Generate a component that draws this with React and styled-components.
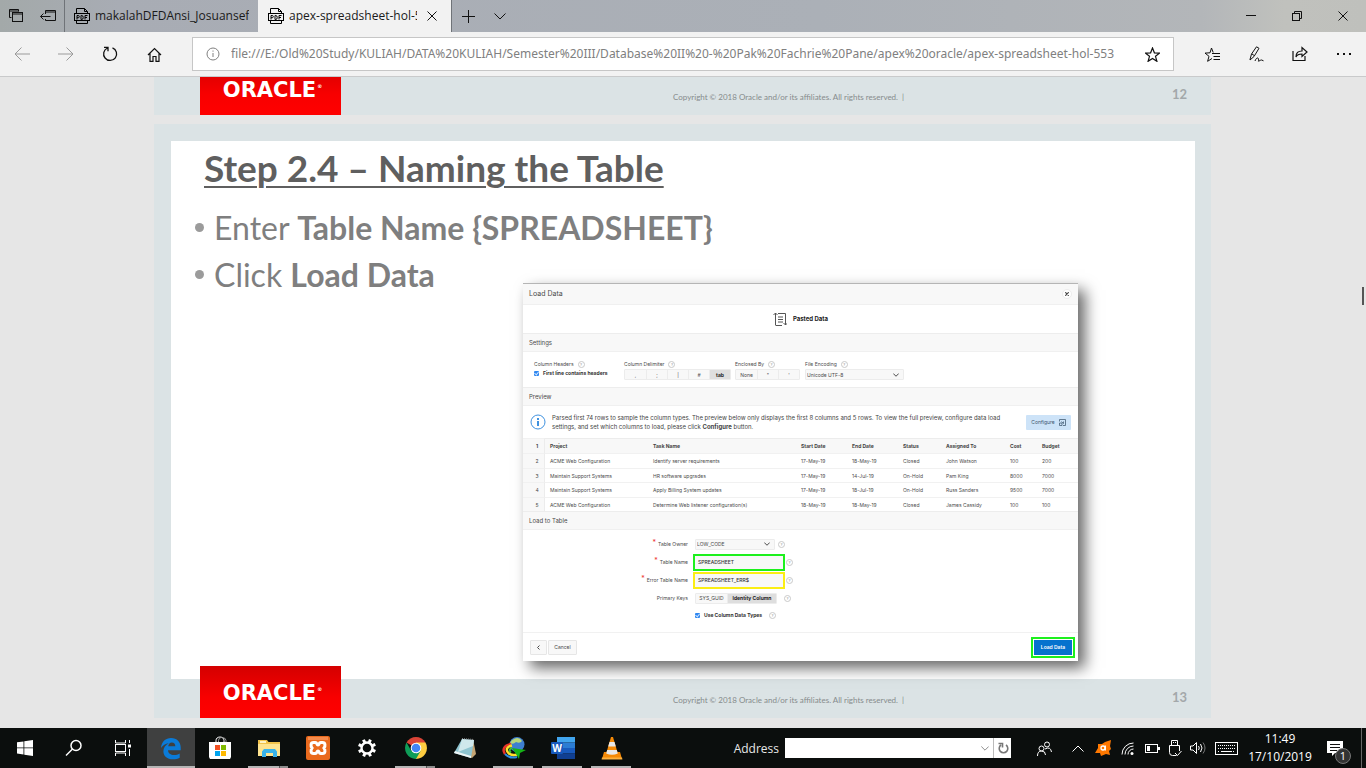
import React from "react";
import styled, { createGlobalStyle, css } from "styled-components";

const UI = `"Open Sans", "Noto Sans", sans-serif`;
const SLIDE = `Lato, "Open Sans", sans-serif`;
const APEX = `Inter, "Liberation Sans", sans-serif`;

const Global = createGlobalStyle`
  * { box-sizing: border-box; }
  body { margin: 0; background: #e6e6e6; font-family: ${UI}; }
  button, input, select { font: inherit; color: inherit; border: 0; background: none; padding: 0; margin: 0; border-radius: 0; }
  svg { display: block; flex: none; }
`;

const Page = styled.div`
  min-height: 100vh;
  display: flex;
  flex-direction: column;
`;

/* ---------- browser chrome ---------- */

const TabStrip = styled.header`
  display: flex;
  height: 32px;
  background: linear-gradient(90deg, #a3a9a9 0, #a8acb4 120px, #abb0b7 60%, #b3b6b9 88%, #c0c1bd 94%, #bfc0bc 100%);
`;
const StripButton = styled.button`
  width: ${(p) => p.$w || 32}px;
  display: grid;
  place-items: center;
  color: #111;
`;
const Tab = styled.div`
  flex: 0 1 194px;
  min-width: 0;
  display: flex;
  align-items: center;
  gap: 5px;
  padding: 0 9px;
  border-left: 1px solid ${(p) => (p.$active ? "#f2f2f2" : "#6f7378")};
  border-right: ${(p) => (p.$active ? "1px solid #6f7378" : "0")};
  background: ${(p) => (p.$active ? "#f2f2f2" : "transparent")};
`;
const TabTitle = styled.span`
  flex: 1;
  font-size: 12px;
  line-height: 18px;
  color: #1a1a1a;
  white-space: nowrap;
  overflow: hidden;
`;
const Spacer = styled.div`
  flex: 1;
`;
const Toolbar = styled.nav`
  display: flex;
  align-items: center;
  height: 45px;
  background: #f2f2f2;
  border-bottom: 1px solid #c9cacb;
`;
const ToolButton = styled.button`
  width: 44px;
  height: 44px;
  display: grid;
  place-items: center;
  color: ${(p) => (p.$dim ? "#9a9a9a" : "#111")};
`;
const AddressBox = styled.div`
  flex: 1;
  min-width: 0;
  height: 34px;
  margin: 0 16px;
  padding: 0 13px;
  display: flex;
  align-items: center;
  gap: 11px;
  background: #fff;
  border: 1px solid #c6c6c6;
  color: #808080;
`;
const AddressInput = styled.input`
  flex: 1;
  min-width: 0;
  font-family: "Noto Sans", sans-serif;
  font-size: 12px;
  line-height: 18px;
  outline: 0;
`;
const StarButton = styled.button`
  color: #111;
`;

/* ---------- document ---------- */

const Viewer = styled.main`
  flex: 1;
  position: relative;
  background: #e6e6e6;
  display: flex;
  flex-direction: column;
  gap: 9px;
  padding: 0 155px 10px 154px;
`;
const ScrollThumb = styled.div`
  position: absolute;
  right: 2px;
  top: 210px;
  width: 2px;
  height: 18px;
  background: #555;
`;
const Slide = styled.section`
  background: #dbe3e5;
  font-family: ${SLIDE};
  padding: ${(p) => (p.$tail ? "0" : "17px 0 0")};
`;
const SlideBody = styled.div`
  background: #fff;
  margin: 0 16px 0 17px;
  padding: 3px 0 18px;
  display: flex;
  flex-direction: column;
`;
const SlideTitle = styled.h1`
  margin: 0;
  padding-left: 33px;
  font-size: 37px;
  line-height: 48px;
  font-weight: 700;
  color: #5f5f5f;
  text-decoration: underline;
  text-decoration-thickness: 2px;
  text-underline-offset: 4px;
`;
const Bullets = styled.ul`
  margin: 12px 0 0;
  padding: 0 0 0 24px;
  list-style: none;
  color: #7f7f7f;
  font-size: 32px;
  line-height: 47px;
`;
const Bullet = styled.li`
  display: flex;
  align-items: center;
  gap: 10px;
  &::before {
    content: "";
    width: 9px;
    height: 9px;
    border-radius: 50%;
    background: #9b9b9b;
  }
`;
const SlideFoot = styled.footer`
  display: flex;
  align-items: flex-end;
  height: ${(p) => (p.$tail ? 38 : 39)}px;
  padding: 0 24px 0 46px;
  overflow: ${(p) => (p.$tail ? "hidden" : "visible")};
`;
const Brand = styled.div`
  position: relative;
  width: 141px;
  height: 52px;
  flex: none;
  display: flex;
  justify-content: center;
  align-items: center;
  gap: 1px;
  padding: 2px 0 0 4px;
  background: linear-gradient(#d40000, #f80000 60%, #ff0000);
  color: #fff;
  font-family: "DejaVu Sans", sans-serif;
  font-size: 21px;
  font-weight: 700;
  line-height: 26px;
`;
const Reg = styled.small`
  font-size: 5px;
  line-height: 10px;
  height: 18px;
`;
const Copyright = styled.span`
  flex: 1;
  padding-left: 332px;
  height: 26px;
  font-size: 8px;
  line-height: 16px;
  color: #868b8c;
`;
const PageNo = styled.span`
  height: 29px;
  font-size: 13px;
  line-height: 16px;
  font-weight: 700;
  color: #a3a8aa;
`;

/* ---------- Load Data dialog ---------- */

const Dialog = styled.section`
  align-self: flex-end;
  width: 555px;
  margin: -15px 117px 0 0;
  background: #fff;
  border-top: 1px solid #b5b5b5;
  box-shadow: 7px 7px 14px rgba(0, 0, 0, 0.6);
  font-family: ${APEX};
  font-size: 5px;
  line-height: 8px;
  color: #4a4a4a;
`;
const Bar = styled.div`
  display: flex;
  align-items: center;
  justify-content: space-between;
  height: ${(p) => p.$h || 19}px;
  padding: 0 6px;
  background: #f8f8f8;
  border-top: ${(p) => (p.$h ? "0" : "1px solid #ededed")};
  border-bottom: 1px solid #f0f0f0;
  font-size: ${(p) => (p.$h ? 7 : 6)}px;
`;
const CloseDialog = styled.button`
  width: 10px;
  height: 10px;
  display: grid;
  place-items: center;
  border: 1px solid #ececec;
  border-radius: 50%;
  background: #fff;
`;
const Pasted = styled.div`
  height: 28px;
  display: flex;
  align-items: center;
  justify-content: center;
  gap: 6px;
  font-size: 6px;
  font-weight: 700;
  color: #222;
`;
const Settings = styled.div`
  height: 35px;
  display: grid;
  grid-template-columns: 90px 111px 70px 99px;
  padding: 8px 11px 0;
`;
const Group = styled.div`
  display: flex;
  flex-direction: column;
  gap: 1px;
`;
const GroupLabel = styled.div`
  display: flex;
  align-items: center;
  gap: 4px;
  white-space: nowrap;
`;
const Help = styled.button`
  width: 7px;
  height: 7px;
  display: grid;
  place-items: center;
  border: 1px solid #c9c9c9;
  border-radius: 50%;
  font-size: 4px;
  line-height: 5px;
  color: #888;
`;
const Check = styled.label`
  display: flex;
  align-items: center;
  gap: 4px;
  font-weight: 700;
  white-space: nowrap;
  color: #333;
`;
const Tick = styled.input`
  appearance: none;
  width: 5px;
  height: 5px;
  border-radius: 1px;
  background: #2f87f0;
  display: grid;
  place-items: center;
  &:checked::before {
    content: "";
    width: 2px;
    height: 3px;
    border: solid #cfe4ff;
    border-width: 0 1px 1px 0;
    transform: rotate(40deg);
  }
`;
const Segments = styled.div`
  display: flex;
  width: max-content;
  height: 11px;
  border: 1px solid #ececec;
  border-radius: 1px;
  background: #f8f8f8;
`;
const Segment = styled.button`
  width: ${(p) => p.$w || 21}px;
  display: grid;
  place-items: center;
  border-left: 1px solid #ececec;
  white-space: nowrap;
  &:first-child { border-left: 0; }
  ${(p) => p.$on && css`
    background: #dedede;
    font-weight: 700;
    color: #222;
  `}
`;
const SelectWrap = styled.div`
  display: flex;
  align-items: center;
  width: ${(p) => p.$w}px;
  height: 11px;
  padding-right: 4px;
  background: #f8f8f8;
  border: 1px solid #ececec;
  border-radius: 1px;
`;
const SelectBox = styled.select`
  appearance: none;
  flex: 1;
  padding-left: 1px;
`;
const Info = styled.div`
  height: 32px;
  display: flex;
  align-items: center;
  gap: 6px;
  padding: 0 7px;
`;
const InfoText = styled.p`
  flex: 1;
  margin: 0;
  font-size: 6px;
  line-height: 9px;
  color: #444;
  white-space: nowrap;
`;
const Configure = styled.button`
  width: 45px;
  height: 15px;
  display: flex;
  align-items: center;
  justify-content: center;
  gap: 4px;
  border-radius: 1px;
  background: #cde3f8;
  color: #3c556d;
`;
const DataTable = styled.table`
  width: 100%;
  table-layout: fixed;
  border-collapse: separate;
  border-spacing: 0;
  text-align: left;
  tr { height: 15px; }
  tr:nth-child(even) { height: 14px; }
`;
const Cell = styled.td`
  padding: 0 0 0 5px;
  border-top: 1px solid #f1f1f1;
  white-space: nowrap;
  color: #4c4c4c;
`;
const HeadCell = styled.th`
  padding: 0 0 0 5px;
  border-top: 1px solid #ececec;
  background: #f8f8f8;
  font-weight: 700;
  white-space: nowrap;
  color: #444;
`;
const RowNo = styled.th`
  padding: 0 0 0 7px;
  text-align: center;
  background: #f8f8f8;
  border-top: 1px solid #f1f1f1;
  border-right: 1px solid #ececec;
  font-weight: ${(p) => (p.$head ? 700 : 400)};
`;
const Form = styled.form`
  height: 102px;
  padding-top: 5px;
`;
const FormRow = styled.div`
  display: grid;
  grid-template-columns: 165px auto auto;
  justify-content: start;
  align-items: center;
  height: 18px;
  column-gap: ${(p) => p.$gap || 7}px;
  &:last-child { height: 16px; }
  ${SelectWrap} + ${Help}, ${() => FieldRef} + ${Help} { margin-left: -4px; }
`;
const FormLabel = styled.label`
  text-align: right;
  white-space: nowrap;
`;
const Star = styled.span`
  color: #e33;
  font-size: 7px;
  vertical-align: top;
  line-height: 5px;
  margin-right: 2px;
`;
const Field = styled.input`
  width: 92px;
  height: 17px;
  padding: 0 3px;
  border: 2px solid ${(p) => p.$mark};
  background: #f8f8f8;
  outline: 0;
  color: #333;
  font-weight: 500;
`;
const FieldRef = Field;
const DialogFoot = styled.div`
  height: 29px;
  display: flex;
  align-items: center;
  gap: 1px;
  padding: 0 3px 0 7px;
  border-top: 1px solid #f1f1f1;
`;
const PlainButton = styled.button`
  width: ${(p) => p.$w}px;
  height: 15px;
  display: grid;
  place-items: center;
  border: 1px solid #e6e6e6;
  border-radius: 1px;
  background: #f8f8f8;
`;
const Highlight = styled.div`
  padding: 1px;
  border: 2px solid #1df01d;
`;
const Submit = styled.button`
  display: block;
  width: 38px;
  height: 15px;
  background: #0572ce;
  color: #fff;
  font-weight: 600;
`;

/* ---------- taskbar ---------- */

const Taskbar = styled.footer`
  display: flex;
  align-items: stretch;
  height: 40px;
  background: #0b0e0d;
  color: #fff;
  font-size: 12px;
`;
const TaskButton = styled.button`
  width: ${(p) => (p.$active ? 48 : 49)}px;
  display: grid;
  place-items: center;
  background: ${(p) => (p.$active ? "#3f4040" : "transparent")};
  position: relative;
  &::after {
    content: "";
    position: absolute;
    bottom: 0;
    left: ${(p) => (p.$active ? 0 : 4)}px;
    right: ${(p) => (p.$active ? 0 : 5)}px;
    height: ${(p) => (p.$open || p.$active ? 2 : 0)}px;
    background: ${(p) => (p.$many ? "linear-gradient(90deg, #b5b5b5 31px, #555 31px, #555 32px, #8c8c8c 32px)" : "#b5b5b5")};
  }
`;
const Address = styled.div`
  display: flex;
  align-items: center;
  gap: 6px;
  label { font-size: 12px; color: #e8e8e8; }
`;
const AddressEntry = styled.div`
  display: flex;
  width: 226px;
  height: 20px;
  background: #fff;
  color: #555;
  input { flex: 1; min-width: 0; color: #111; outline: 0; }
`;
const EntryButton = styled.button`
  width: 18px;
  display: grid;
  place-items: center;
  border-left: 1px solid ${(p) => (p.$line ? "#bbb" : "#fff")};
`;
const Tray = styled.div`
  display: flex;
  align-items: stretch;
  padding-left: 14px;
`;
const TrayButton = styled.button`
  width: ${(p) => p.$w || 24}px;
  display: grid;
  place-items: center;
  color: #fff;
`;
const Clock = styled.time`
  width: 74px;
  text-align: center;
  font-size: 12px;
  line-height: 18px;
  padding-top: 2px;
`;
const Badge = styled.span`
  position: absolute;
  right: -8px;
  bottom: -8px;
  width: 16px;
  height: 16px;
  border: 1px solid #777;
  border-radius: 50%;
  background: #333;
  font-size: 11px;
  line-height: 14px;
  text-align: center;
`;
const Notice = styled.span`
  position: relative;
`;
const ShowDesktop = styled.button`
  width: 5px;
  margin-left: 8px;
  border-left: 1px solid #666;
`;

/* ---------- drawings ---------- */

const Line = ({ w = 16, h = w, box, sw = 1, children, ...rest }) => (
  <svg width={w} height={h} viewBox={box || `0 0 ${w} ${h}`} fill="none" stroke="currentColor" strokeWidth={sw} aria-hidden="true" {...rest}>
    {children}
  </svg>
);

const PdfIcon = () => (
  <Line>
    <path d="M2.500 5V.5h8l3 3V5M10.500.5v3h3M2.500 13v2.500h11V13" />
    <rect x=".5" y="5.500" width="15" height="7" />
    <path d="M3 11.500v-4h1.300q1 0 1 1.100T4.300 9.700H3M7 7.500v4h.8q1.400 0 1.400-2T7.800 7.500zM11 11.500v-4h2.500M11 9.500h2" />
  </Line>
);
const Chevron = ({ w = 12, up }) => (
  <Line w={w} h={w / 2 + 1} box="0 0 12 7" sw={w < 8 ? 2 : 1}>
    <path d={up ? "M.5 6.500L6 1l5.500 5.500" : "M.5.5L6 6 11.500.5"} />
  </Line>
);
const Cross = ({ w = 10 }) => (
  <Line w={w} box="0 0 10 10" sw={w < 8 ? 3 : 1}><path d="M.5.5l9 9M9.500.5l-9 9" /></Line>
);
const StarPath = "M7.500 1l1.900 4.800 5.100.3-4 3.200 1.400 5-4.400-2.800-4.400 2.800 1.400-5-4-3.200 5.100-.3z";

const EdgeLogo = () => (
  <svg width="22" height="23" viewBox="0 0 22 23" aria-hidden="true">
    <path fill="#0b7bd8" d="M1 11C1.500 4.500 5.800 1 11 1c6 0 9.700 4.200 9.700 9.600v2.700H8c.1 3.200 2.800 4.700 6 4.700 2.200 0 4-.6 5.700-1.600v4.300C17.800 21.800 15.600 22.300 13 22.300 7 22.300 3.400 19 3.400 14.200c0-3.700 2.100-6.300 5.300-8C5.500 6.500 2.700 8.300 1 11zm7.200-1.700h7.100c0-2.500-1.200-3.900-3.500-3.900-1.900 0-3.200 1.500-3.600 3.900z" />
  </svg>
);
const StoreLogo = () => (
  <svg width="24" height="24" viewBox="0 0 24 24" aria-hidden="true">
    <path d="M8 7V4.500C8 2.500 9.500 1 12 1s4 1.500 4 3.500V7" fill="none" stroke="#fff" />
    <path d="M10.500 7V4.500Q10.500 2 13 1.500M18 7V4.500Q18 2 14.500 1.500" fill="none" stroke="#999" />
    <path d="M1 6h22v15l-1 2H2l-1-2z" fill="#fff" />
    <path d="M7 9h5v5H7z" fill="#f25022" /><path d="M13 9h5v5h-5z" fill="#7fba00" />
    <path d="M7 15h5v5H7z" fill="#00a4ef" /><path d="M13 15h5v5h-5z" fill="#ffb900" />
  </svg>
);
const FolderLogo = () => (
  <svg width="22" height="19" viewBox="0 0 22 19" aria-hidden="true">
    <path d="M0 1h9l1.500 2H22v14H0z" fill="#f2c34b" /><path d="M2 2h6v2H2z" fill="#fff3c4" />
    <path d="M0 5h22v12H0z" fill="#ffe48f" />
    <path d="M4 18v-5.500L6 10h11l2 2.500V18h-4v-4H8v4z" fill="#39b3ea" />
  </svg>
);
const XamppLogo = () => (
  <svg width="24" height="24" viewBox="0 0 24 24" aria-hidden="true">
    <rect width="24" height="24" rx="2" fill="#ea6a1d" /><path d="M2 1h20v3H2z" fill="#f58b4c" />
    <path d="M7.500 6.500h1.800c2 0 1.200 2.500 2.700 2.500s.7-2.500 2.700-2.500h1.800c3 0 3 3.500 1.500 5.500 1.500 2 1.500 5.500-1.500 5.500h-1.800c-2 0-1.200-2.500-2.700-2.500s-.7 2.500-2.700 2.500H7.500c-3 0-3-3.500-1.500-5.500-1.500-2-1.500-5.500 1.500-5.500z" fill="none" stroke="#fff" strokeWidth="3" />
  </svg>
);
const Gear = () => (
  <svg width="20" height="20" viewBox="0 0 20 20" fill="none" stroke="#fff" aria-hidden="true">
    <circle cx="10" cy="10" r="5.500" strokeWidth="2.400" />
    <g strokeWidth="3">
      {[0, 45, 90, 135, 180, 225, 270, 315].map((a) => (
        <path key={a} d="M10 1v3" transform={`rotate(${a + 22} 10 10)`} />
      ))}
    </g>
  </svg>
);
const ChromeLogo = () => (
  <svg width="22" height="22" viewBox="0 0 22 22" aria-hidden="true">
    <path d="M11 11L1.500 5.500A11 11 0 0 1 20.500 5.500z" fill="#db4437" />
    <path d="M11 11V5.500h9.500A11 11 0 0 1 11 22z" fill="#ffcd40" />
    <path d="M11 22A11 11 0 0 1 1.500 5.500L6.200 13.700 11 16.500 15.700 13.700z" fill="#0f9d58" />
    <circle cx="11" cy="11" r="5.300" fill="#fff" /><circle cx="11" cy="11" r="4.300" fill="#4285f4" />
  </svg>
);
const NotepadLogo = () => (
  <svg width="24" height="24" viewBox="0 0 24 24" aria-hidden="true">
    <path d="M20 3l3 15-4 4-3-1z" fill="#c5a574" />
    <path d="M9 3l12 1-3 18L1 17z" fill="#8fc5d1" /><path d="M9 3l12 1-1 6L5 16z" fill="#cfe8ec" />
    <path d="M1 17l17 5v-2L2 15z" fill="#eef5f6" /><path d="M9 2.500l12 1" stroke="#888" strokeDasharray="1 1" />
  </svg>
);
const IdmLogo = () => (
  <svg width="24" height="24" viewBox="0 0 24 24" aria-hidden="true">
    <circle cx="15" cy="8.500" r="7.500" fill="#3e7fd0" /><path d="M12 3q5-3 8 2-2 3-6 1-3 3-6 1 1-3 4-4z" fill="#b8d77c" />
    <path d="M9 8C2 9 0 14 3 18" fill="none" stroke="#e8332a" strokeWidth="2.500" />
    <path d="M10 9.500c-5 1-6.500 4-4 7s6 3 9 2" fill="none" stroke="#ffdf2b" strokeWidth="2.500" />
    <path d="M10 12c-3 1-3 3-1 4.500" fill="none" stroke="#3fc03a" strokeWidth="2" />
    <path d="M3 18q5 5 12 3" fill="none" stroke="#2d8de0" strokeWidth="2" />
    <path d="M10 12l14 2-6 3-1 6-3-5z" fill="#16b316" />
  </svg>
);
const WordLogo = () => (
  <svg width="24" height="22" viewBox="0 0 24 22" aria-hidden="true">
    <path d="M6 0h18v5.500H6z" fill="#41a5ee" /><path d="M6 5.500h18V11H6z" fill="#2b7cd3" />
    <path d="M6 11h18v5.500H6z" fill="#185abd" /><path d="M6 16.500h18V22H6z" fill="#103f91" />
    <rect y="5" width="12" height="12" rx="1" fill="#185abd" />
    <text x="6" y="15" textAnchor="middle" fill="#fff" fontFamily="Open Sans" fontWeight="700" fontSize="10">W</text>
  </svg>
);
const VlcLogo = () => (
  <svg width="22" height="24" viewBox="0 0 22 24" aria-hidden="true">
    <path d="M3 16h16l2 7H1z" fill="#f58a07" /><path d="M1 21.500h20l.4 2H.6z" fill="#ffb13d" />
    <path d="M10 1h2l5 17q-6 3-12 0z" fill="#f58a07" />
    <path d="M8.500 6h5l1.300 4.500H7.200zM6.200 14h9.600l1 3.500q-5.800 2.500-11.600 0z" fill="#e9e9e9" />
  </svg>
);

/* ---------- data ---------- */

const URL_TEXT =
  "file:///E:/Old%20Study/KULIAH/DATA%20KULIAH/Semester%20III/Database%20II%20-%20Pak%20Fachrie%20Pane/apex%20oracle/apex-spreadsheet-hol-553";

const COLS = [22, 103, 148, 51, 51, 43, 64, 32, 41];
const HEADS = ["Project", "Task Name", "Start Date", "End Date", "Status", "Assigned To", "Cost", "Budget"];
const ROWS = [
  ["ACME Web Configuration", "Identify server requirements", "17-May-19", "18-May-19", "Closed", "John Watson", "100", "200"],
  ["Maintain Support Systems", "HR software upgrades", "17-May-19", "14-Jul-19", "On-Hold", "Pam King", "8000", "7000"],
  ["Maintain Support Systems", "Apply Billing System updates", "17-May-19", "18-Jul-19", "On-Hold", "Russ Sanders", "9500", "7000"],
  ["ACME Web Configuration", "Determine Web listener configuration(s)", "18-May-19", "18-May-19", "Closed", "James Cassidy", "100", "100"],
];

const APPS = [
  { name: "Start", icon: <svg width="16" height="16" viewBox="0 0 16 16" fill="#fff" aria-hidden="true"><path d="M0 2.300l6.500-.9v6.100H0zM7.300 1.300L16 0v7.500H7.300zM0 8.300h6.500v6.100L0 13.500zM7.300 8.300H16V16l-8.700-1.200z" /></svg> },
  { name: "Search", icon: <Line w={18} sw={1.5}><circle cx="11" cy="6.500" r="5" /><path d="M7.500 10L1 16.500" /></Line> },
  { name: "Task View", icon: <Line w={18}><path d="M1.500 1v3h10V1M1.500 17v-3h10v3M15.500 1v3M15.500 10v7" /><rect x="1.500" y="5.500" width="10" height="7" /><path d="M14 5.500h3v3h-3z" fill="currentColor" stroke="none" /></Line> },
  { name: "Microsoft Edge", icon: <EdgeLogo />, active: true },
  { name: "Store", icon: <StoreLogo /> },
  { name: "File Explorer", icon: <FolderLogo />, open: true, many: true },
  { name: "XAMPP", icon: <XamppLogo /> },
  { name: "Settings", icon: <Gear /> },
  { name: "Chrome", icon: <ChromeLogo />, open: true, many: true },
  { name: "Notepad", icon: <NotepadLogo /> },
  { name: "IDM", icon: <IdmLogo />, open: true },
  { name: "Word", icon: <WordLogo />, open: true },
  { name: "VLC", icon: <VlcLogo />, open: true },
];

const HelpDot = () => <Help type="button" aria-label="Help">?</Help>;

function BrowserChrome() {
  return (
    <>
      <TabStrip>
        <StripButton aria-label="Tabs set aside">
          <Line w={14}><path d="M.5.5h9v2M.5.5v8h2M.5 2h9" /><rect x="3.500" y="3.500" width="10" height="9" /><path d="M3.500 5h10" /></Line>
        </StripButton>
        <StripButton aria-label="Set tabs aside">
          <Line w={16} h={12}><path d="M5.500 4V.5h10v10h-10V9M5.500 2h10M.5 6.500h10M3.500 3.500l-3 3 3 3" /></Line>
        </StripButton>
        <Tab><PdfIcon /><TabTitle>makalahDFDAnsi_Josuansef</TabTitle></Tab>
        <Tab $active>
          <PdfIcon />
          <TabTitle>apex-spreadsheet-hol-5</TabTitle>
          <StripButton $w={20} aria-label="Close tab"><Cross /></StripButton>
        </Tab>
        <StripButton aria-label="New tab"><Line w={14}><path d="M7.500 1v13M1 7.500h13" /></Line></StripButton>
        <StripButton aria-label="Tab previews"><Chevron /></StripButton>
        <Spacer />
        <StripButton $w={46} aria-label="Minimize"><Line w={10} h={2}><path d="M0 .5h10" /></Line></StripButton>
        <StripButton $w={46} aria-label="Restore"><Line w={10}><rect x=".5" y="2.500" width="7" height="7" /><path d="M2.500 2V.5h7v7H8" /></Line></StripButton>
        <StripButton $w={46} aria-label="Close window"><Cross /></StripButton>
      </TabStrip>
      <Toolbar>
        <ToolButton $dim aria-label="Back"><Line w={16} h={14}><path d="M16 7H1M7.500.5L1 7l6.500 6.500" /></Line></ToolButton>
        <ToolButton $dim aria-label="Forward"><Line w={16} h={14}><path d="M0 7h15M8.500.5L15 7l-6.500 6.500" /></Line></ToolButton>
        <ToolButton aria-label="Refresh"><Line w={16} sw={1.3}><path d="M5.500 2a6.500 6.500 0 1 0 5-.1M2 1.300h4v4" /></Line></ToolButton>
        <ToolButton aria-label="Home"><Line w={15} sw={1.2}><path d="M1 8l6.500-6.500L14 8M3 6.500v7.900h3V9.500h3v4.900h3V6.500" /></Line></ToolButton>
        <AddressBox>
          <Line w={14}><circle cx="7" cy="7" r="6" /><path d="M7 6v4M7 3.500v1.200" /></Line>
          <AddressInput readOnly aria-label="Address" value={URL_TEXT} />
          <StarButton aria-label="Add to favorites"><Line w={15} sw={1.2}><path d={StarPath} /></Line></StarButton>
        </AddressBox>
        <ToolButton aria-label="Favorites"><Line w={16} h={15}><path d="M8 11.500l-4.400 2.800 1.400-5L1 6.100l5-.3L7.500 1l1.700 4.500M8 6.500h8M9.500 9.500H16M9.500 12.500H16" /></Line></ToolButton>
        <ToolButton aria-label="Add notes"><Line w={16}><path d="M2 13.500L3.500 8 8.500.8l2.500 1.500L6 10.500l-4 3.500zM4 8l2.200 1.500M7 15c1-3 3-4 3.500-2s-1 2.500.5 2 2-1.500 3-.8l1.500.6" /></Line></ToolButton>
        <ToolButton aria-label="Share"><Line w={16} sw={1.2}><path d="M1 5v9.500h12V10M4 11c0-4 2-6 6-6V1.500L15 6l-5 4.500V8C7 8 5 8.500 4 11z" /></Line></ToolButton>
        <ToolButton aria-label="More"><Line w={14} h={2}><path d="M0 1h2M6 1h2M12 1h2" strokeWidth="2" /></Line></ToolButton>
      </Toolbar>
    </>
  );
}

function Foot({ page, tail }) {
  return (
    <SlideFoot $tail={tail}>
      <Brand>ORACLE<Reg>®</Reg></Brand>
      <Copyright>Copyright © 2018 Oracle and/or its affiliates. All rights reserved. &nbsp;|</Copyright>
      <PageNo>{page}</PageNo>
    </SlideFoot>
  );
}

function LoadDataDialog() {
  return (
    <Dialog>
      <Bar $h={21}>Load Data<CloseDialog aria-label="Close"><Cross w={4} /></CloseDialog></Bar>
      <Pasted>
        <Line w={14} color="#555"><path d="M2.500 13V1M.5 3l2-2 2 2M5 1.500h7.500V13M10.500 11l2 2 2-2M2.500 13.500H9M5 5h5M5 7.500h5M5 10h5" /></Line>
        Pasted Data
      </Pasted>
      <Bar>Settings</Bar>
      <Settings>
        <Group>
          <GroupLabel>Column Headers <HelpDot /></GroupLabel>
          <Check><Tick type="checkbox" defaultChecked />First line contains headers</Check>
        </Group>
        <Group>
          <GroupLabel>Column Delimiter <HelpDot /></GroupLabel>
          <Segments>
            {[",", ";", "|", "#"].map((s) => <Segment key={s}>{s}</Segment>)}
            <Segment $on>tab</Segment>
          </Segments>
        </Group>
        <Group>
          <GroupLabel>Enclosed By <HelpDot /></GroupLabel>
          <Segments><Segment>None</Segment><Segment>"</Segment><Segment>'</Segment></Segments>
        </Group>
        <Group>
          <GroupLabel><label htmlFor="enc">File Encoding</label> <HelpDot /></GroupLabel>
          <SelectWrap $w={99}>
            <SelectBox id="enc"><option>Unicode UTF-8</option></SelectBox><Chevron w={6} />
          </SelectWrap>
        </Group>
      </Settings>
      <Bar>Preview</Bar>
      <Info>
        <Line w={16} color="#3f92e0"><circle cx="8" cy="8" r="7" /><path d="M8 7v5M8 4v2" strokeWidth="2" /></Line>
        <InfoText>
          Parsed first 74 rows to sample the column types. The preview below only displays the first 8 columns and 5 rows. To view the full preview, configure data load<br />
          settings, and set which columns to load, please click <b>Configure</b> button.
        </InfoText>
        <Configure>Configure <Line w={7} box="0 0 14 14" sw={1.5}><path d="M1 5V1h12v12H8M1 8h5v5H1zM5 5l4 4V5" /></Line></Configure>
      </Info>
      <DataTable>
        <colgroup>{COLS.map((w, i) => <col key={i} width={w} />)}</colgroup>
        <thead>
          <tr><RowNo $head>1</RowNo>{HEADS.map((h) => <HeadCell key={h}>{h}</HeadCell>)}</tr>
        </thead>
        <tbody>
          {ROWS.map((r, i) => (
            <tr key={i}><RowNo>{i + 2}</RowNo>{r.map((c, j) => <Cell key={j}>{c}</Cell>)}</tr>
          ))}
        </tbody>
      </DataTable>
      <Bar>Load to Table</Bar>
      <Form>
        <FormRow>
          <FormLabel htmlFor="owner"><Star>*</Star>Table Owner</FormLabel>
          <SelectWrap $w={80}><SelectBox id="owner"><option>LOW_CODE</option></SelectBox><Chevron w={6} /></SelectWrap>
          <HelpDot />
        </FormRow>
        <FormRow $gap={5}>
          <FormLabel htmlFor="tname"><Star>*</Star>Table Name</FormLabel>
          <Field id="tname" $mark="#1df01d" defaultValue="SPREADSHEET" />
          <HelpDot />
        </FormRow>
        <FormRow $gap={5}>
          <FormLabel htmlFor="ename"><Star>*</Star>Error Table Name</FormLabel>
          <Field id="ename" $mark="#fbee13" defaultValue="SPREADSHEET_ERR$" />
          <HelpDot />
        </FormRow>
        <FormRow>
          <FormLabel as="span">Primary Keys</FormLabel>
          <Segments><Segment type="button" $w={31}>SYS_GUID</Segment><Segment type="button" $w={49} $on>Identity Column</Segment></Segments>
          <HelpDot />
        </FormRow>
        <FormRow>
          <span />
          <Check><Tick type="checkbox" defaultChecked />Use Column Data Types</Check>
          <HelpDot />
        </FormRow>
      </Form>
      <DialogFoot>
        <PlainButton $w={17} aria-label="Previous"><Line w={3} h={5}><path d="M2.500.5l-2 2 2 2" /></Line></PlainButton>
        <PlainButton $w={29}>Cancel</PlainButton>
        <Spacer />
        <Highlight><Submit>Load Data</Submit></Highlight>
      </DialogFoot>
    </Dialog>
  );
}

function WindowsTaskbar() {
  return (
    <Taskbar>
      {APPS.map((a) => (
        <TaskButton key={a.name} aria-label={a.name} $active={a.active} $open={a.open} $many={a.many}>{a.icon}</TaskButton>
      ))}
      <Spacer />
      <Address>
        <label htmlFor="addr">Address</label>
        <AddressEntry>
          <input id="addr" />
          <EntryButton aria-label="Address history"><Chevron w={8} /></EntryButton>
          <EntryButton $line aria-label="Go"><Line w={12} color="#777" sw={1.6}><path d="M9 3a4.300 4.300 0 1 1-5 0M1.500 1.500h4v4" /></Line></EntryButton>
        </AddressEntry>
      </Address>
      <Tray>
        <TrayButton $w={38} aria-label="People"><Line w={15}><circle cx="10" cy="3.500" r="2.500" /><circle cx="4.500" cy="7.500" r="2.500" /><path d="M.5 15q0-5 4-5t4 4M8 8q5.500-3 6.500 3" /></Line></TrayButton>
        <TrayButton $w={30} aria-label="Hidden icons"><Chevron up /></TrayButton>
        <TrayButton $w={20} aria-label="Avast">
          <svg width="17" height="16" viewBox="0 0 17 16" aria-hidden="true"><path d="M10 2l6-2-1 6 1 3-2 2 1 4-4-1-5 2-1-3-5 0 3-5 0-4 4 0z" fill="#ff7800" /><circle cx="8" cy="8" r="2" fill="none" stroke="#fff" strokeWidth="1.300" /><path d="M10.300 5.500v5" stroke="#fff" strokeWidth="1.300" /></svg>
        </TrayButton>
        <TrayButton $w={28} aria-label="Wi-Fi"><Line w={13}><path d="M1 12.500A11.500 11.500 0 0 1 12.500 1M4 12.500A8.500 8.500 0 0 1 12.500 4M7 12.500A5.500 5.500 0 0 1 12.500 7" /><circle cx="11" cy="11.500" r="1.500" fill="currentColor" stroke="none" /></Line></TrayButton>
        <TrayButton $w={22} aria-label="Battery"><Line w={15} h={9}><rect x=".5" y=".5" width="12" height="8" /><path d="M14 3v3" strokeWidth="2" /><path d="M2 2h3v5H2z" fill="currentColor" stroke="none" /></Line></TrayButton>
        <TrayButton $w={24} aria-label="Safely remove hardware"><Line w={14} h={16}><path d="M3.500 5V.5h6V5M8.500 15.500h-4q-3 0-3-3V5.500h10V11M5.500 2v1M7.500 2v1M7 13l2.500 2.500 4-4.500" /></Line></TrayButton>
        <TrayButton $w={22} aria-label="Volume"><Line w={16} h={14}><path d="M.5 5v4H3l3.500 3.500V1.500L3 5zM8.500 5q1.500 2 0 4M10.500 3q3 4 0 8" /><path d="M13 1.500q4 5.500 0 11" stroke="#777" /></Line></TrayButton>
        <TrayButton $w={34} aria-label="Touch keyboard"><Line w={23} h={13}><rect x=".5" y=".5" width="22" height="12" /><path d="M3 3.500h17M3 6.500h17M3 9.500h2M18 9.500h2" strokeDasharray="1 1" /><path d="M6 9.500h11" /></Line></TrayButton>
        <Clock>11:49<br />17/10/2019</Clock>
        <TrayButton $w={36} aria-label="Notifications">
          <Notice>
            <svg width="16" height="15" viewBox="0 0 16 15" aria-hidden="true"><path d="M0 0h16v12H8l-3 3v-3H0z" fill="#fff" /><path d="M3 3.500h10M3 6.500h10M3 9.500h7" stroke="#111" /></svg>
            <Badge>1</Badge>
          </Notice>
        </TrayButton>
        <ShowDesktop aria-label="Show desktop" />
      </Tray>
    </Taskbar>
  );
}

export default function App() {
  return (
    <Page>
      <Global />
      <BrowserChrome />
      <Viewer>
        <Slide $tail><Foot page="12" tail /></Slide>
        <Slide>
          <SlideBody>
            <SlideTitle>Step 2.4 – Naming the Table</SlideTitle>
            <Bullets>
              <Bullet><span>Enter <b>Table Name {"{SPREADSHEET}"}</b></span></Bullet>
              <Bullet><span>Click <b>Load Data</b></span></Bullet>
            </Bullets>
            <LoadDataDialog />
          </SlideBody>
          <Foot page="13" />
        </Slide>
        <ScrollThumb />
      </Viewer>
      <WindowsTaskbar />
    </Page>
  );
}
